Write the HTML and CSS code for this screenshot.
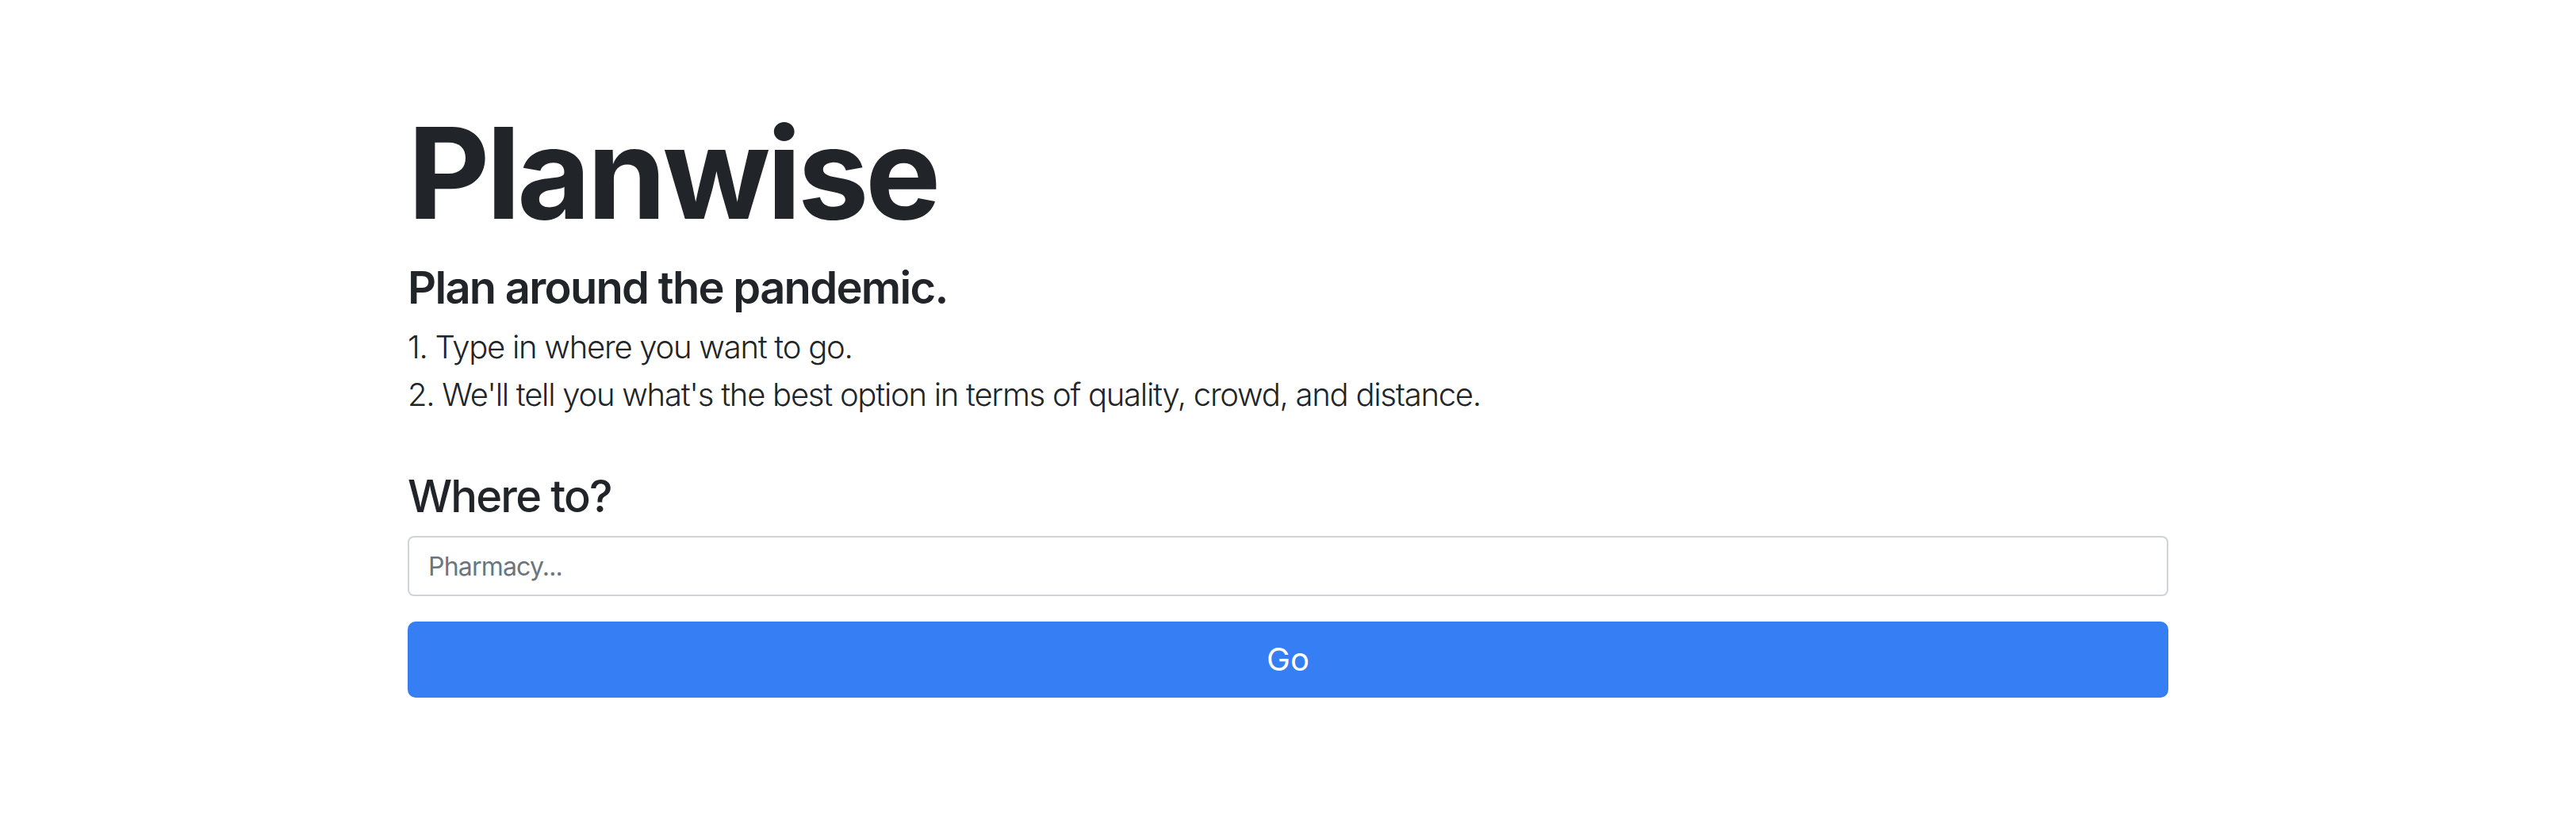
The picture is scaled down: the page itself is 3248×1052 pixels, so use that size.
FILE: index.html
```html
<!DOCTYPE html>
<html lang="en">
<head>
<meta charset="utf-8">
<title>Planwise</title>
<link rel="stylesheet" href="styles.css">
</head>
<body>
<main class="container">
  <h1 class="brand">Planwise</h1>
  <h3 class="tagline">Plan around the pandemic.</h3>
  <p class="lead">1. Type in where you want to go.<br>2. We'll tell you what's the best option in terms of quality, crowd, and distance.</p>
  <form class="search" onsubmit="return false;">
    <h3 class="label">Where to?</h3>
    <input class="field" type="text" placeholder="Pharmacy...">
    <button class="go" type="submit">Go</button>
  </form>
</main>
</body>
</html>
```

FILE: styles.css
```css
html, body {
  margin: 0;
  padding: 0;
  background: #ffffff;
}
body {
  font-family: Inter, "Noto Sans", "Liberation Sans", sans-serif;
  color: #212529;
}
.container {
  width: 2220px;
  margin: 0 auto;
  padding-top: 122px;
  display: flex;
  flex-direction: column;
}
.brand {
  margin: 0 0 16px 0;
  font-size: 160px;
  line-height: 1.2;
  font-weight: 700;
  letter-spacing: -4.5px;
}
.tagline {
  margin: 0 0 11px 0;
  font-size: 56px;
  line-height: 1.2;
  font-weight: 600;
  letter-spacing: -1.7px;
}
.lead {
  margin: 0 0 65px 0;
  font-size: 40px;
  line-height: 60px;
  font-weight: 300;
  letter-spacing: -1.25px;
}
.search {
  display: flex;
  flex-direction: column;
  margin: 0;
}
.label {
  margin: 0 0 16px 0;
  font-size: 56px;
  line-height: 1.2;
  font-weight: 500;
  letter-spacing: -1.8px;
}
.field {
  box-sizing: border-box;
  height: 76px;
  width: 100%;
  padding: 12px 24px;
  font-family: inherit;
  font-size: 32px;
  line-height: 48px;
  letter-spacing: -0.8px;
  color: #495057;
  background: #fff;
  border: 2px solid #ced4da;
  border-radius: 8px;
  outline: none;
}
.field::placeholder {
  color: #6c757d;
  opacity: 1;
}
.go {
  box-sizing: border-box;
  margin-top: 32px;
  height: 96px;
  width: 100%;
  padding: 16px 32px;
  font-family: inherit;
  font-size: 40px;
  line-height: 60px;
  font-weight: 400;
  color: #fff;
  background: #367ef4;
  border: 2px solid #367ef4;
  border-radius: 10px;
  cursor: pointer;
}
```
